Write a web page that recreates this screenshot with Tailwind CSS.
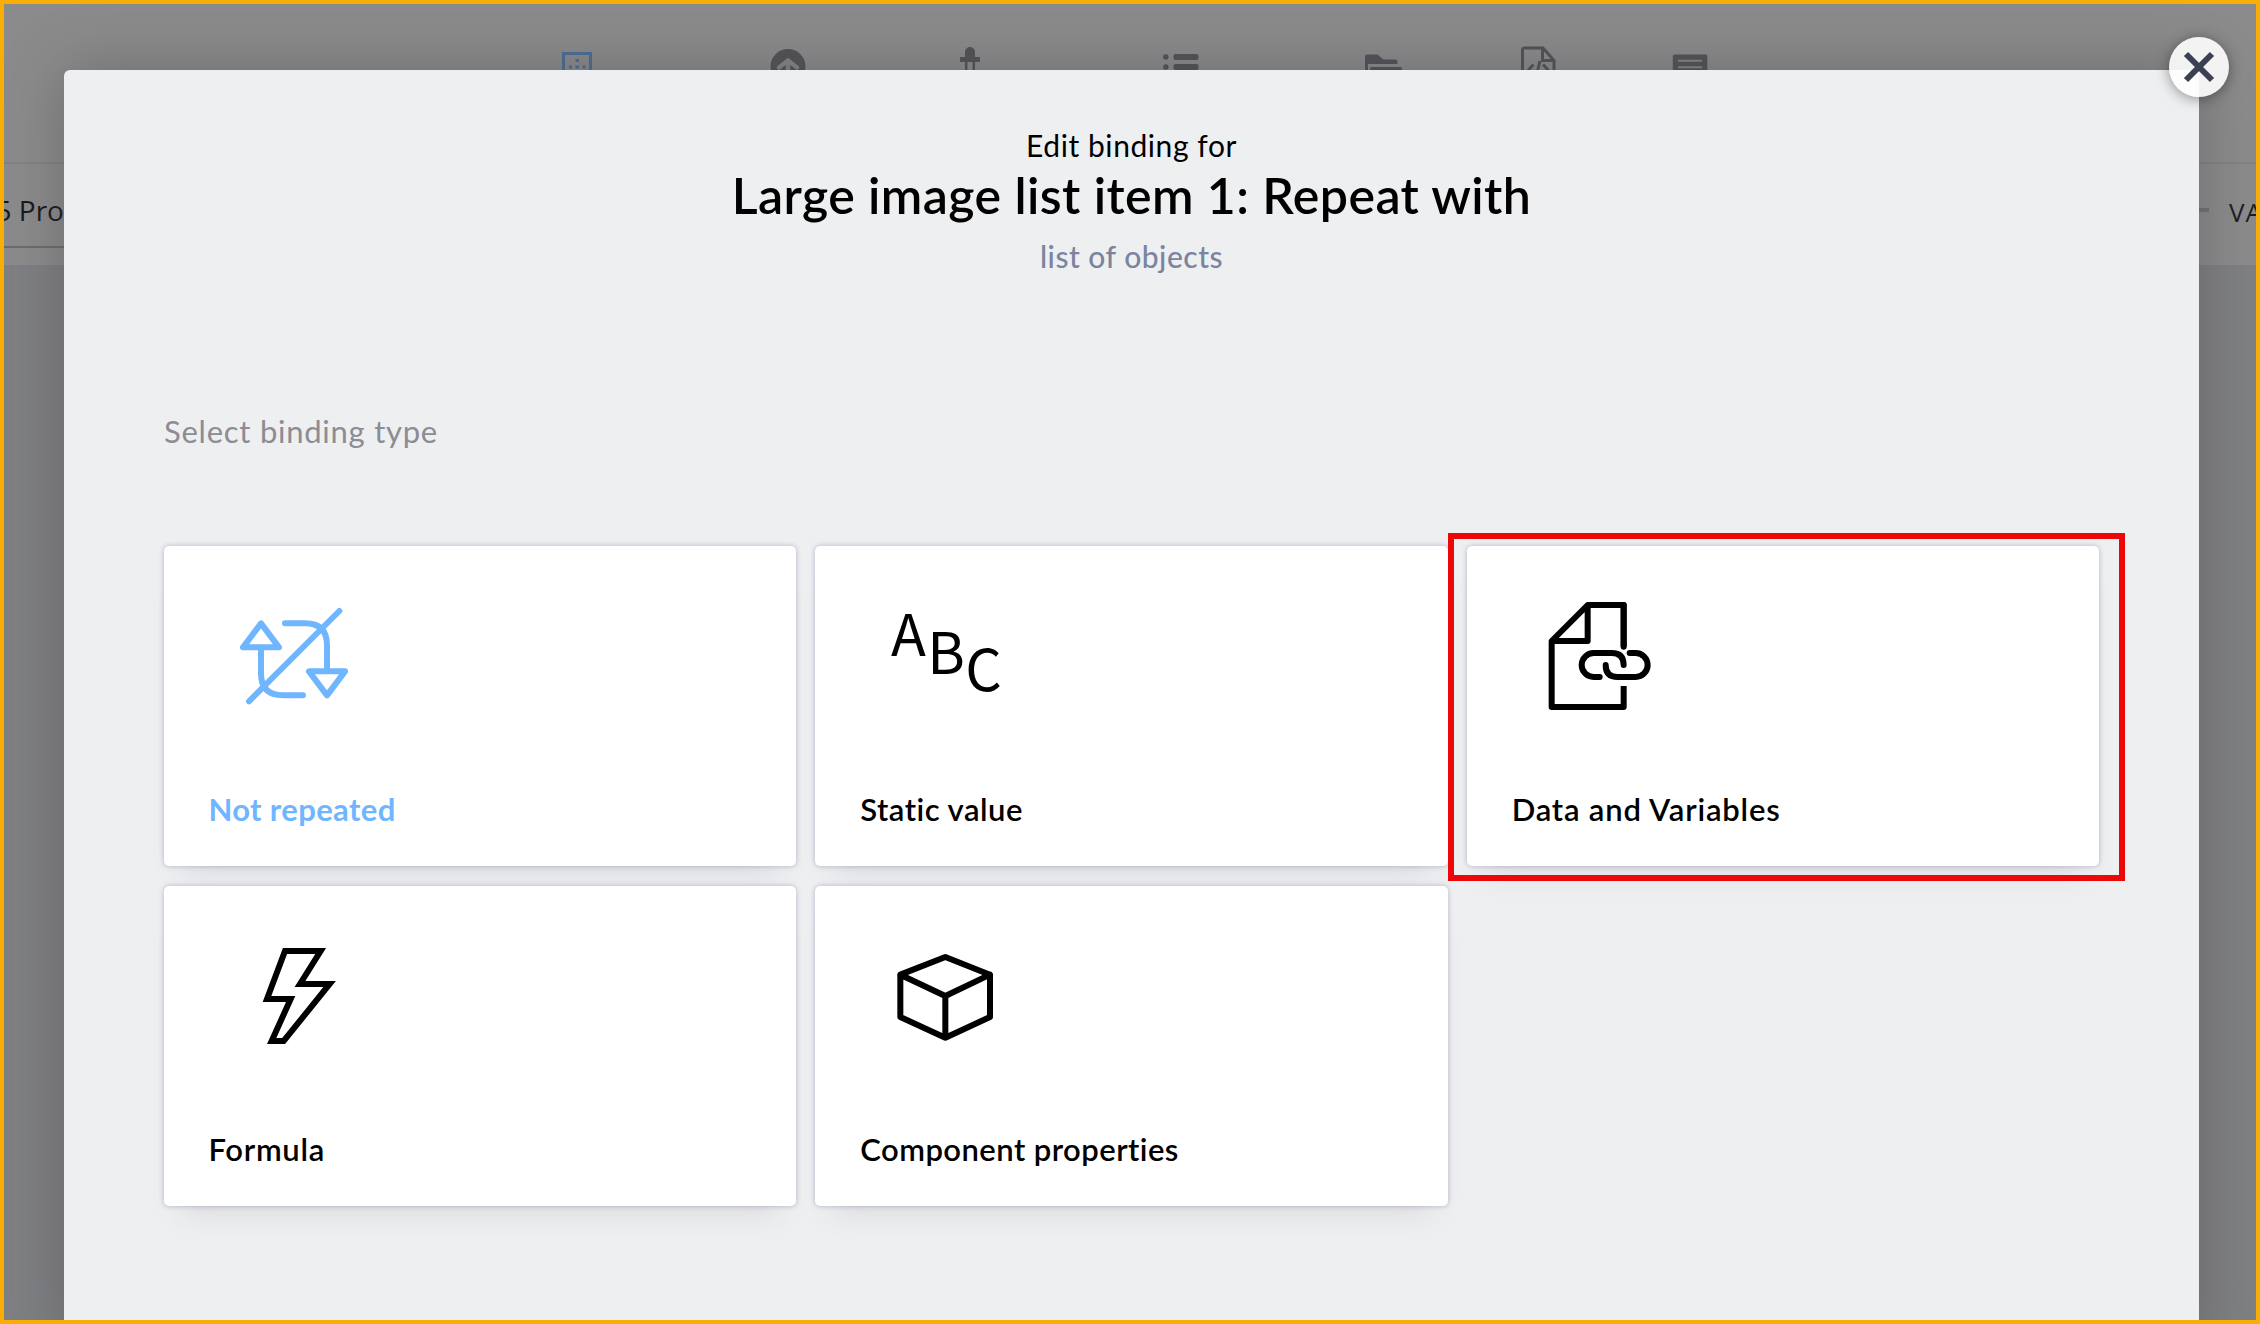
<!DOCTYPE html>
<html lang="en">
<head>
<meta charset="utf-8">
<title>Edit binding</title>
<script src="https://cdn.jsdelivr.net/npm/@tailwindcss/browser@4"></script>
</head>
<body class="h-[1324px] w-[2260px] overflow-hidden">
<div class="relative h-[1324px] w-[2260px] overflow-hidden border-4 border-[#f9ad05] bg-[#7f8083] font-['Lato',sans-serif] text-black">

  <!-- Dimmed application behind the dialog -->
  <div class="flex h-[261px] flex-col bg-[#8b8b8c]">
    <div class="h-[158px]">
      <svg class="block h-[158px] w-[2252px]" viewBox="4 4 2252 158" fill="none">
        <g stroke="#496f98" stroke-width="3">
          <path d="M563.5 80V53.500H590.500V80"/>
          <path d="M575.500 60.500h3.500M569 67h3M575.500 67h3.500M582.500 67h3" />
        </g>
        <circle cx="788" cy="66.500" r="17.500" fill="#515257"/>
        <path d="M779 67.500l9-7 9 7M788 61v16" stroke="#858586" stroke-width="4.500" stroke-linecap="round"/>
        <path d="M965 57v-5a5 5 0 0 1 10 0v5h5v5h-20v-5z" fill="#515257"/>
        <path d="M966.200 60v20M973.800 60v20" stroke="#515257" stroke-width="2.500"/>
        <g fill="#515257">
          <circle cx="1165.800" cy="57" r="2.700"/><circle cx="1165.800" cy="67" r="2.700"/>
          <rect x="1173.500" y="54" width="25" height="6" rx="2"/><rect x="1173.500" y="64" width="25" height="6" rx="2"/>
          <path d="M1365 80V56.500q0-2 2-2h10.500l6 5h12q2 0 2 2V64H1368v16z"/>
          <path d="M1370 80v-11q0-2 2-2h28q2 0 2 2v11z"/>
          <path d="M1672.800 80V56.500q0-2 2-2h30.500q2 0 2 2V80z"/>
        </g>
        <path d="M1522.500 80V50q0-2 2-2h18.500l11 12.500V80M1542.500 48v12.500h12M1533.500 64.500l-5.500 6M1540 61l-3 12M1543 64.500l5.500 6" stroke="#515257" stroke-width="3"/>
        <path d="M1678 60.700h24M1678 67.300h24" stroke="#858586" stroke-width="2"/>
      </svg>
    </div>
    <div class="flex h-[103px] justify-between border-t-2 border-[#828283]">
      <div class="h-[84px] w-[70px] border-b-2 border-[#6c6c6e] pt-[28px] font-['Open_Sans',sans-serif] text-[28px] leading-[36px] whitespace-nowrap text-[#18191d]"><span class="-ml-[8.500px]">5 Pro</span></div>
      <div class="flex w-[60px] items-start whitespace-nowrap">
        <div class="mt-[44px] h-[4px] w-[13px] shrink-0 bg-[#727274]"></div>
        <div class="mt-[32px] ml-[20px] font-['Open_Sans',sans-serif] text-[26px] leading-[32px] tracking-[1px] text-[#1c1e24]">VA</div>
      </div>
    </div>
  </div>

  <!-- Dialog -->
  <main class="absolute top-[66px] left-[60px] h-[1270px] w-[2135px] rounded-tl-[6px] bg-[#eeeff1] px-[100px] pt-[57px] shadow-[0_0_60px_rgba(64,60,64,0.4)]">
    <header class="flex flex-col items-center whitespace-nowrap">
      <p class="text-[30px] leading-9 tracking-[0.57px]">Edit binding for</p>
      <h1 class="mt-0.5 text-[50px] leading-[60px] font-semibold tracking-[0.43px]">Large image list item 1: Repeat with</h1>
      <p class="mt-[13px] text-[30px] leading-9 font-medium tracking-[0.5px] text-[#7b849f]">list of objects</p>
    </header>

    <h2 class="mt-[139px] text-[31px] leading-9 tracking-[0.75px] text-[#8b8c94]">Select binding type</h2>

    <section class="mt-[97px] grid grid-cols-3 gap-x-[19px] gap-y-5 whitespace-nowrap">
      <article class="h-80 rounded-[5px] bg-white pt-[50px] shadow-[0_0_5px_rgba(70,70,120,0.35),0_22px_30px_-18px_rgba(60,60,80,0.13)]">
        <svg class="ml-[70px] block size-[120px]" viewBox="282 587 360 360" fill="none" stroke="#6fb6ff" stroke-width="18" stroke-linecap="round" stroke-linejoin="round">
          <path d="M327 903L598 632M363 669L309 741H417ZM507 813H615L561 885ZM435 669H495Q561 669 561 735V813M363 741V819Q363 885 429 885H489"/>
        </svg>
        <h3 class="mt-[75px] ml-[44.500px] text-[31px] leading-9 font-bold tracking-[0.35px] text-[#6fb6ff]">Not repeated</h3>
      </article>

      <article class="h-80 rounded-[5px] bg-white pt-[50px] shadow-[0_0_5px_rgba(70,70,120,0.35),0_22px_30px_-18px_rgba(60,60,80,0.13)]">
        <svg class="ml-[70.500px] block size-[120px] font-['Noto_Sans_CJK_SC',sans-serif] text-[172px]" viewBox="317 198 360 360">
          <text x="332" y="378">A</text><text x="441" y="432">B</text><text x="555" y="484">C</text>
        </svg>
        <h3 class="mt-[75px] ml-[45px] text-[31px] leading-9 font-semibold tracking-[0.5px]">Static value</h3>
      </article>

      <article class="relative h-80 rounded-[5px] bg-white pt-[50px] shadow-[0_0_5px_rgba(70,70,120,0.35),0_22px_30px_-18px_rgba(60,60,80,0.13)]">
        <svg class="ml-[70px] block size-[120px]" viewBox="322 228 360 360" fill="none" stroke="#000" stroke-width="18" stroke-linejoin="round">
          <path d="M582 498V561H366V363L474 255H582V380M474 255V363H366"/>
          <path stroke-linecap="round" d="M582 255V380M510 471H492A36 36 0 0 1 492 399H546Q582 399 582 435M528 435Q528 471 564 471H618A36 36 0 0 0 618 399H600"/>
        </svg>
        <h3 class="mt-[75px] ml-[45px] text-[31px] leading-9 font-semibold tracking-[0.8px]">Data and Variables</h3>
        <div class="absolute -top-[13px] -left-[18.700px] h-[348px] w-[677px] border-6 border-[#ec0808]"></div>
      </article>

      <article class="h-80 rounded-[5px] bg-white pt-[50px] shadow-[0_0_5px_rgba(70,70,120,0.35),0_22px_30px_-18px_rgba(60,60,80,0.13)]">
        <svg class="ml-[70px] block size-[120px]" viewBox="252 228 360 360" fill="none" stroke="#000" stroke-width="18">
          <path d="M405 273H512L450 372H539L401 543H365L422 417H351Z"/>
        </svg>
        <h3 class="mt-[75px] ml-[44.500px] text-[31px] leading-9 font-semibold tracking-[0.7px]">Formula</h3>
      </article>

      <article class="h-80 rounded-[5px] bg-white pt-[50px] shadow-[0_0_5px_rgba(70,70,120,0.35),0_22px_30px_-18px_rgba(60,60,80,0.13)]">
        <svg class="ml-[70.500px] block size-[120px]" viewBox="317 198 360 360" fill="none" stroke="#000" stroke-width="18" stroke-linejoin="round" stroke-linecap="round">
          <path d="M495 261L629 314V441L495 503L360 441V314ZM360 314L495 378L629 314M495 378V503"/>
        </svg>
        <h3 class="mt-[75px] ml-[45px] text-[31px] leading-9 font-semibold tracking-[0.45px]">Component properties</h3>
      </article>
    </section>
  </main>

  <button class="absolute top-[33px] left-[2164.500px] flex size-[60px] items-center justify-center rounded-full bg-white/90 shadow-[0_2px_14px_rgba(0,0,0,0.4)]" aria-label="Close">
    <svg class="size-[60px]" viewBox="0 0 60 60" stroke="#3b4052" stroke-width="6"><path d="M17 17L43 43M43 17L17 43"/></svg>
  </button>
</div>
</body>
</html>
